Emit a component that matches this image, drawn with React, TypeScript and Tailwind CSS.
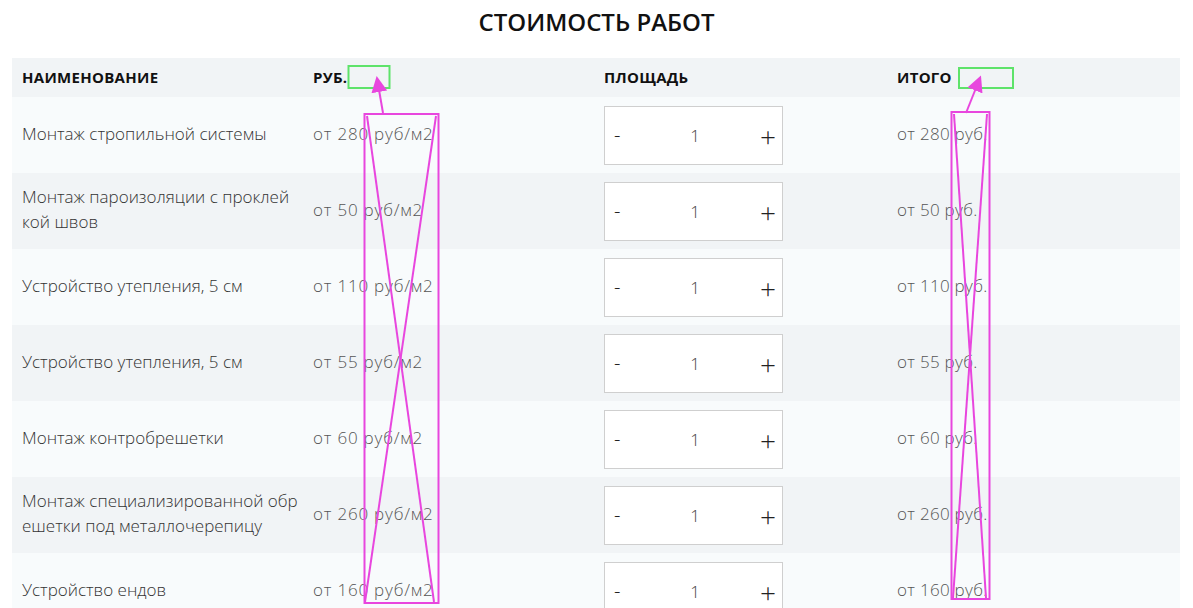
import React from "react";

type Row = { name: React.ReactNode; price: number };

const rows: Row[] = [
  { name: "Монтаж стропильной системы", price: 280 },
  {
    name: (
      <>
        Монтаж пароизоляции с проклей
        <br />
        кой швов
      </>
    ),
    price: 50,
  },
  { name: "Устройство утепления, 5 см", price: 110 },
  { name: "Устройство утепления, 5 см", price: 55 },
  { name: "Монтаж контробрешетки", price: 60 },
  {
    name: (
      <>
        Монтаж специализированной обр
        <br />
        ешетки под металлочерепицу
      </>
    ),
    price: 260,
  },
  { name: "Устройство ендов", price: 160 },
];

const cols = "grid grid-cols-[291px_291px_293px_1fr]";

function Counter() {
  return (
    <div className="grid h-[59px] w-[179px] grid-cols-[1fr_auto_1fr] items-center border border-[#cfcfcf] bg-white pl-[9px] pr-[6px]">
      <span className="justify-self-start text-[20px] font-light leading-none text-[#222]">-</span>
      <span className="text-[17px] font-light text-[#444]">1</span>
      <span className="mt-[2px] justify-self-end text-[28px] font-light leading-none text-[#222]">+</span>
    </div>
  );
}

// разметка поверх таблицы (рамки и стрелки)
function Marks() {
  const pink = "#e846de";
  const green = "#5ee36a";
  return (
    <svg className="pointer-events-none absolute left-0 top-0" width="1193" height="608">
      <defs>
        <marker id="ah" markerWidth="8" markerHeight="8" refX="4" refY="4" orient="auto">
          <path d="M0,0 L8,4 L0,8 z" fill={pink} />
        </marker>
      </defs>
      <rect x="348.5" y="66" width="41" height="22" fill="none" stroke={green} strokeWidth="2" />
      <rect x="959" y="68" width="54" height="20" fill="none" stroke={green} strokeWidth="2" />

      <rect x="364.5" y="114" width="74" height="489" fill="none" stroke={pink} strokeWidth="2" />
      <line x1="367" y1="116" x2="434" y2="602" stroke={pink} strokeWidth="2" />
      <line x1="436" y1="116" x2="365" y2="602" stroke={pink} strokeWidth="2" />
      <line x1="383" y1="113" x2="378" y2="84" stroke={pink} strokeWidth="2" markerEnd="url(#ah)" />

      <rect x="951.5" y="112" width="38" height="487" fill="none" stroke={pink} strokeWidth="2" />
      <line x1="954" y1="114" x2="986" y2="598" stroke={pink} strokeWidth="2" />
      <line x1="987" y1="114" x2="953" y2="598" stroke={pink} strokeWidth="2" />
      <line x1="966" y1="113" x2="978" y2="83" stroke={pink} strokeWidth="2" markerEnd="url(#ah)" />
    </svg>
  );
}

export default function App() {
  return (
    <div
      className="relative h-[608px] w-[1193px] overflow-hidden bg-white"
      style={{ fontFamily: '"Open Sans", "Noto Sans", sans-serif' }}
    >
      <h1 className="pt-[6px] text-center text-[24px] font-semibold leading-[32px] text-[#111]">
        СТОИМОСТЬ РАБОТ
      </h1>
      <div className="mx-[12px] mt-[20px] w-[1168px]">
        <div className={`${cols} h-[39px] items-center bg-[#f1f4f6] pb-[1px] text-[15px] font-bold uppercase tracking-[0.3px] text-[#111]`}>
          <div className="pl-[10px]">Наименование</div>
          <div className="pl-[10px]">Руб.</div>
          <div className="pl-[10px]">Площадь</div>
          <div className="pl-[10px]">Итого</div>
        </div>
        {rows.map((r, i) => (
          <div
            key={i}
            className={`${cols} h-[76px] items-center text-[17px] font-light leading-[25px] ${
              i % 2 === 0 ? "bg-[#f8fbfc]" : "bg-[#f1f4f6]"
            }`}
          >
            <div className="pb-[4px] pl-[10px] text-[#333]">{r.name}</div>
            <div className="pb-[4px] pl-[10px] tracking-[0.8px] text-[#555]">от {r.price} руб/м2</div>
            <div className="pl-[10px]">
              <Counter />
            </div>
            <div className="pb-[4px] pl-[10px] tracking-[0.3px] text-[#555]">от {r.price} руб.</div>
          </div>
        ))}
      </div>
      <Marks />
    </div>
  );
}
